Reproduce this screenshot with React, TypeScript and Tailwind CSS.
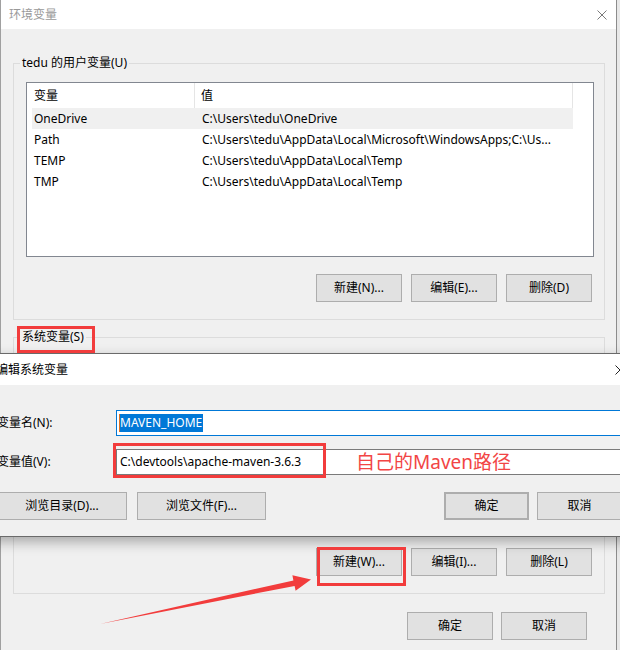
import React from "react";

const FONT = "font-['Noto_Sans','Noto_Sans_CJK_SC',sans-serif]";

function Btn({ children, className = "" }: { children: React.ReactNode; className?: string }) {
  return (
    <button
      className={`h-[28px] border border-[#adadad] bg-[#e1e1e1] flex items-center justify-center text-[12px] text-black ${className}`}
    >
      {children}
    </button>
  );
}

function CloseX({ color }: { color: string }) {
  return (
    <svg width="10" height="10" viewBox="0 0 10 10" className="block">
      <path d="M0.5 0.5 L9.5 9.5 M9.5 0.5 L0.5 9.5" stroke={color} strokeWidth="1" fill="none" />
    </svg>
  );
}

const rows = [
  { name: "OneDrive", value: "C:\\Users\\tedu\\OneDrive", selected: true },
  { name: "Path", value: "C:\\Users\\tedu\\AppData\\Local\\Microsoft\\WindowsApps;C:\\Us...", selected: false },
  { name: "TEMP", value: "C:\\Users\\tedu\\AppData\\Local\\Temp", selected: false },
  { name: "TMP", value: "C:\\Users\\tedu\\AppData\\Local\\Temp", selected: false },
];

function ListBox({ withRows }: { withRows: boolean }) {
  return (
    <div className="w-[568px] h-[175px] border border-[#828790] bg-white overflow-hidden">
      {withRows && (
        <>
          <div className="flex h-[25px] w-[546px] text-[12px] leading-[25px]">
            <div className="w-[168px] pl-[7px] border-r border-[#e5e5e5]">变量</div>
            <div className="flex-1 pl-[6px] border-r border-[#e5e5e5]">值</div>
          </div>
          {rows.map((r) => (
            <div
              key={r.name}
              className={`flex h-[21px] ml-[5px] w-[541px] text-[12px] leading-[21px] ${r.selected ? "bg-[#f0f0f0]" : ""}`}
            >
              <div className="w-[163px] pl-[2px] whitespace-nowrap">{r.name}</div>
              <div className="flex-1 pl-[7px] whitespace-nowrap overflow-hidden">{r.value}</div>
            </div>
          ))}
        </>
      )}
    </div>
  );
}

function Group({
  label,
  withRows,
  buttons,
  className = "",
}: {
  label: string;
  withRows: boolean;
  buttons: string[];
  className?: string;
}) {
  return (
    <div className={`relative ml-[12px] w-[592px] border border-[#dcdcdc] pl-[12px] pt-[18px] pb-[17px] ${className}`}>
      <span className="absolute left-[6px] top-[-9px] px-[2px] bg-[#f0f0f0] text-[12px] leading-[16px] whitespace-nowrap">
        {label}
      </span>
      <ListBox withRows={withRows} />
      <div className="mt-[17px] flex justify-end gap-[9px] w-[566px]">
        {buttons.map((b) => (
          <Btn key={b} className="w-[86px]">
            {b}
          </Btn>
        ))}
      </div>
    </div>
  );
}

export default function App() {
  return (
    <div className={`relative w-[620px] h-[650px] overflow-hidden bg-[#e8e8e8] text-black ${FONT}`}>
      {/* Outer window */}
      <div className="w-[617px] h-[650px] border-l border-r border-l-[#a0a0a0] border-r-[#8c8c8c] bg-[#f0f0f0]">
        <div className="h-[29px] bg-white flex items-center pl-[8px] pr-[9px]">
          <span className="text-[12px] text-[#999999]">环境变量</span>
          <span className="ml-auto">
            <CloseX color="#7a7a7a" />
          </span>
        </div>
        <Group
          className="mt-[34px]"
          label="tedu 的用户变量(U)"
          withRows={true}
          buttons={["新建(N)...", "编辑(E)...", "删除(D)"]}
        />
        <Group
          className="mt-[17px]"
          label="系统变量(S)"
          withRows={false}
          buttons={["新建(W)...", "编辑(I)...", "删除(L)"]}
        />
        <div className="mt-[18px] flex justify-end gap-[8px] pr-[29px]">
          <Btn className="w-[86px]">确定</Btn>
          <Btn className="w-[86px]">取消</Btn>
        </div>
      </div>

      {/* Edit dialog overlay */}
      <div className="absolute left-[-13px] top-[353px] w-[650px] border-y border-[#6a6a6a] shadow-[0_5px_12px_rgba(0,0,0,0.3)]">
        <div className="h-[31px] bg-white flex items-center pl-[9px] pr-[12px]">
          <span className="text-[12px]">编辑系统变量</span>
          <span className="ml-auto">
            <CloseX color="#222222" />
          </span>
        </div>
        <div className="h-[151px] bg-[#f0f0f0] pl-[10px] pt-[25px]">
          <div className="flex items-center h-[26px]">
            <div className="w-[119px] text-[12px]">变量名(N):</div>
            <div className="w-[520px] h-[26px] border border-[#0078d7] bg-white flex items-center pl-[2px]">
              <span className="w-[1px] h-[18px] bg-[#e07020]" />
              <span className="h-[18px] leading-[18px] bg-[#0078d7] text-white text-[12px] pr-[1px]">MAVEN_HOME</span>
            </div>
          </div>
          <div className="flex items-center h-[26px] mt-[13px]">
            <div className="w-[119px] text-[12px]">变量值(V):</div>
            <div className="w-[520px] h-[26px] border border-[#7a7a7a] bg-white flex items-center pl-[3px] text-[12px]">
              C:\devtools\apache-maven-3.6.3
            </div>
          </div>
          <div className="flex mt-[17px]">
            <Btn className="w-[130px]">浏览目录(D)...</Btn>
            <Btn className="w-[129px] ml-[10px]">浏览文件(F)...</Btn>
            <Btn className="w-[85px] ml-[178px] border-2 border-[#0078d7]">确定</Btn>
            <Btn className="w-[85px] ml-[8px]">取消</Btn>
          </div>
        </div>
      </div>

      {/* Annotations */}
      <div className="absolute left-[17px] top-[326px] w-[78px] h-[27px] border-[3px] border-[#f23c3c]" />
      <div className="absolute left-[113px] top-[443px] w-[213px] h-[35px] border-[3px] border-[#f23c3c]" />
      <div className="absolute left-[317px] top-[547px] w-[89px] h-[39px] border-[3px] border-[#f23c3c]" />
      <div className="absolute left-[356px] top-[450px] text-[19px] leading-[25px] text-[#f24545] whitespace-nowrap">
        自己的Maven路径
      </div>
      <svg className="absolute left-0 top-0 pointer-events-none" width="620" height="650" viewBox="0 0 620 650">
        <polygon
          points="100,624 293.4,580.4 292.4,575.2 311,579.5 295.6,590.8 294.6,585.9"
          fill="#f23c3c"
        />
      </svg>
    </div>
  );
}
